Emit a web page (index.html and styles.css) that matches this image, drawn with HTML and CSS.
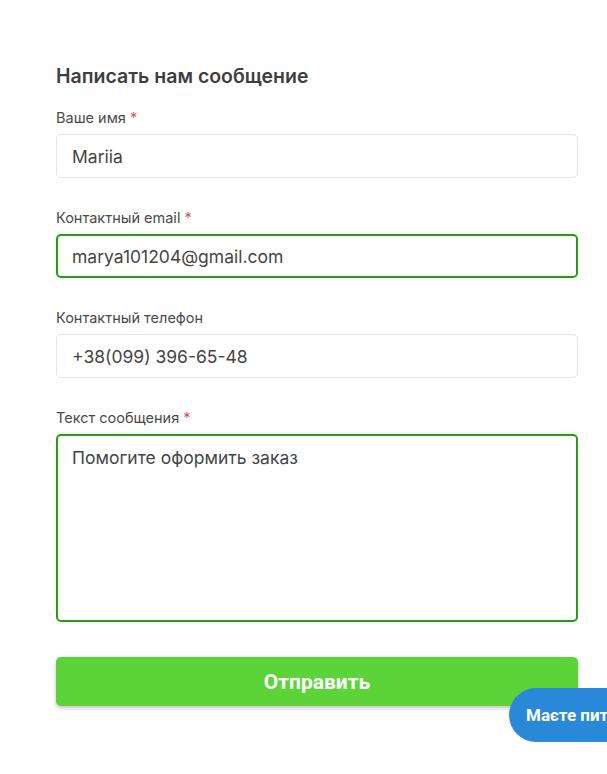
FILE: index.html
```html
<!DOCTYPE html>
<html lang="uk">
<head>
<meta charset="utf-8">
<link rel="stylesheet" href="styles.css">
</head>
<body>
<div class="page">
  <form class="form">
    <h2 class="title">Написать нам сообщение</h2>
    <div class="field">
      <label class="label">Ваше имя <span class="req">*</span></label>
      <div class="input">Mariia</div>
    </div>
    <div class="field">
      <label class="label">Контактный email <span class="req">*</span></label>
      <div class="input focus">marya101204@gmail.com</div>
    </div>
    <div class="field">
      <label class="label">Контактный телефон</label>
      <div class="input">+38(099) 396-65-48</div>
    </div>
    <div class="field">
      <label class="label">Текст сообщения <span class="req">*</span></label>
      <div class="input focus area">Помогите оформить заказ</div>
    </div>
    <button type="button" class="submit">Отправить</button>
  </form>
  <div class="chat">Маєте питання?</div>
</div>
</body>
</html>
```
FILE: styles.css
```css
html, body {
  margin: 0;
  padding: 0;
  background: #ffffff;
}
.page {
  position: relative;
  width: 607px;
  height: 774px;
  overflow: hidden;
  font-family: "Inter", "Noto Sans", sans-serif;
  color: #444444;
}
.form {
  padding: 64px 29px 0 56px;
  display: flex;
  flex-direction: column;
}
.title {
  margin: 0 0 19px;
  font-size: 19.5px;
  line-height: 25px;
  font-weight: 600;
  color: #3f3f3f;
}
.field {
  display: flex;
  flex-direction: column;
  gap: 6px;
  margin-bottom: 30px;
}
.label {
  font-size: 14.5px;
  line-height: 20px;
  color: #4a4a4a;
}
.req {
  color: #e5534b;
}
.input {
  box-sizing: border-box;
  height: 44px;
  border: 1px solid #e3e3e3;
  border-radius: 5px;
  padding: 0 15px;
  display: flex;
  align-items: center;
  font-size: 17.5px;
  color: #454545;
}
.input.focus {
  border: 2px solid #22a012;
  padding: 0 14px;
}
.input.area {
  height: 188px;
  align-items: flex-start;
  padding-top: 11px;
}
.field:last-of-type {
  margin-bottom: 35px;
}
.submit {
  height: 49px;
  border: none;
  border-radius: 5px;
  background: #5dd33a;
  color: #ffffff;
  font-family: "Roboto", sans-serif;
  font-weight: 700;
  font-size: 21px;
  box-shadow: 0 2px 4px rgba(0, 0, 0, 0.25);
  padding: 0;
}
.chat {
  position: absolute;
  left: 509px;
  top: 688px;
  height: 54px;
  width: 200px;
  box-sizing: border-box;
  padding-left: 17px;
  border-radius: 27px;
  background: #2a88d8;
  color: #ffffff;
  font-family: "Roboto", sans-serif;
  font-weight: 700;
  font-size: 17px;
  line-height: 54px;
  white-space: nowrap;
}
```
